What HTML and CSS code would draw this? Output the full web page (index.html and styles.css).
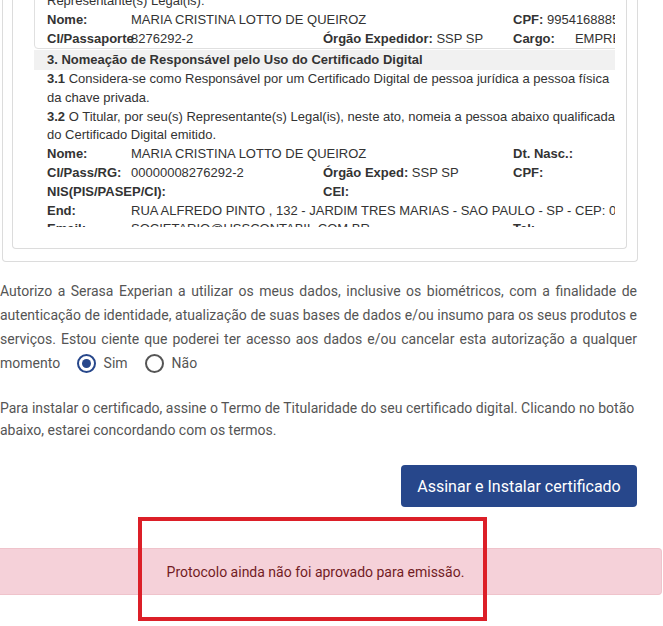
FILE: index.html
```html
<!DOCTYPE html>
<html lang="pt-BR">
<head>
<meta charset="utf-8">
<title>Termo de Titularidade</title>
<link rel="stylesheet" href="styles.css">
</head>
<body>
<div class="page">
  <div class="panel">
    <div class="doc-box">
      <div class="doc-clip">
        <div class="doc">
          <div class="rep">
            <div class="line">Representante(s) Legal(is):</div>
            <div class="grid">
              <b class="c1">Nome:</b><span class="c2w">MARIA CRISTINA LOTTO DE QUEIROZ</span><span class="c4"><b>CPF:</b> 99541688850</span>
              <b class="c1 over">CI/Passaporte</b><span class="c2">8276292-2</span><span class="c3"><b>Órgão Expedidor:</b> SSP SP</span><span class="c4 cargo"><b>Cargo:</b><span>EMPRESÁRIA</span></span>
            </div>
          </div>
          <div class="sec-title">3. Nomeação de Responsável pelo Uso do Certificado Digital</div>
          <div class="line"><b>3.1</b> Considera-se como Responsável por um Certificado Digital de pessoa jurídica a pessoa física</div>
          <div class="line">da chave privada.</div>
          <div class="line"><b>3.2</b> O Titular, por seu(s) Representante(s) Legal(is), neste ato, nomeia a pessoa abaixo qualificada</div>
          <div class="line">do Certificado Digital emitido.</div>
          <div class="grid">
            <b class="c1">Nome:</b><span class="c2w">MARIA CRISTINA LOTTO DE QUEIROZ</span><b class="c4">Dt. Nasc.:</b>
            <b class="c1">CI/Pass/RG:</b><span class="c2">00000008276292-2</span><span class="c3"><b>Órgão Exped:</b> SSP SP</span><b class="c4">CPF:</b>
            <b class="c1w">NIS(PIS/PASEP/CI):</b><b class="c3">CEI:</b><span class="c4"></span>
            <b class="c1">End:</b><span class="c2all">RUA ALFREDO PINTO , 132 - JARDIM TRES MARIAS - SAO PAULO - SP - CEP: 05890-000</span>
            <b class="c1">Email:</b><span class="c2w">SOCIETARIO@USSCONTABIL.COM.BR</span><b class="c4">Tel:</b>
          </div>
        </div>
      </div>
    </div>
  </div>

  <p class="consent">Autorizo a Serasa Experian a utilizar os meus dados, inclusive os biométricos, com a finalidade de autenticação de identidade, atualização de suas bases de dados e/ou insumo para os seus produtos e serviços. Estou ciente que poderei ter acesso aos dados e/ou cancelar esta autorização a qualquer momento <span class="radios"><label class="radio"><span class="dot checked"></span>Sim</label><label class="radio"><span class="dot"></span>Não</label></span></p>

  <p class="install">Para instalar o certificado, assine o Termo de Titularidade do seu certificado digital. Clicando no botão abaixo, estarei concordando com os termos.</p>

  <div class="actions">
    <button class="btn">Assinar e Instalar certificado</button>
  </div>

  <div class="alert">Protocolo ainda não foi aprovado para emissão.</div>

  <div class="highlight"></div>
</div>
</body>
</html>
```

FILE: styles.css
```css
html, body {
  margin: 0;
  padding: 0;
  background: #fff;
}

.page {
  position: relative;
  width: 663px;
  height: 626px;
  overflow: hidden;
}

.panel {
  width: 615px;
  margin: -18px 0 0 2px;
  border: 1px solid #dcdcdc;
  border-top: none;
  border-radius: 0 0 4px 4px;
  padding: 0 10px 12px 9px;
}

.doc-box {
  border: 1px solid #dcdcdc;
  border-top: none;
  border-radius: 0 0 4px 4px;
  padding: 0 11px 21px 21px;
}

.doc-clip {
  width: 581px;
  height: 245px;
  overflow: hidden;
}

.doc {
  width: 720px;
  font-family: "Liberation Sans", Arial, sans-serif;
  font-size: 13px;
  color: #333;
  line-height: 18.8px;
  white-space: nowrap;
}

.rep {
  border: 1px solid #e0e0e0;
  border-radius: 4px;
  padding: 7.5px 0 0 12px;
  line-height: 19px;
}

.line {
  height: 18.8px;
}

.rep .line {
  height: 19px;
}

.grid {
  display: grid;
  grid-template-columns: 84px 192px 190px 1fr;
  grid-auto-rows: 18.8px;
}

.rep .grid {
  grid-auto-rows: 19px;
}

.doc > .line,
.doc > .grid {
  padding-left: 13px;
}

.c1 { grid-column: 1; font-weight: bold; }
.c1.over { overflow: visible; white-space: nowrap; width: 84px; }
.c1w { grid-column: 1 / span 2; font-weight: bold; }
.c2 { grid-column: 2; }
.c2w { grid-column: 2 / span 2; }
.c2all { grid-column: 2 / span 3; }
.c3 { grid-column: 3; }
.c4 { grid-column: 4; }

.cargo {
  display: flex;
  gap: 20px;
}

.sec-title {
  margin-top: 1.5px;
  height: 20px;
  line-height: 20px;
  background: #f1f1f1;
  font-weight: bold;
  padding-left: 13px;
}

.consent,
.install {
  width: 637px;
  margin: 17px 0 0 0;
  font-family: Roboto, "Liberation Sans", sans-serif;
  font-size: 14px;
  color: #555;
  text-align: justify;
}

.consent {
  line-height: 24px;
}

.install {
  margin-top: 22px;
  line-height: 22px;
  text-align: left;
}

.radios {
  display: inline-flex;
  align-items: center;
  gap: 0;
  margin-left: 13px;
  vertical-align: top;
  height: 24px;
}

.radio {
  display: inline-flex;
  align-items: center;
  margin-right: 17px;
}

.dot {
  box-sizing: border-box;
  width: 19px;
  height: 19px;
  border: 2px solid #555;
  border-radius: 50%;
  margin-right: 8px;
  position: relative;
}

.dot.checked {
  border-color: #27478b;
}

.dot.checked::after {
  content: "";
  position: absolute;
  left: 3px;
  top: 3px;
  width: 9px;
  height: 9px;
  border-radius: 50%;
  background: #27478b;
}

.actions {
  width: 637px;
  display: flex;
  justify-content: flex-end;
  margin-top: 24px;
}

.btn {
  width: 236px;
  height: 42px;
  border: none;
  border-radius: 4px;
  background: #27478b;
  color: #fff;
  font-family: Roboto, "Liberation Sans", sans-serif;
  font-size: 16px;
  padding: 0;
}

.alert {
  box-sizing: border-box;
  width: 662px;
  height: 47px;
  margin-top: 41px;
  background: #f5d1d9;
  border: 1px solid #efc3cb;
  border-left: none;
  border-radius: 0 4px 4px 0;
  color: #721c24;
  font-family: Roboto, "Liberation Sans", sans-serif;
  font-size: 14px;
  display: flex;
  align-items: center;
  justify-content: center;
  padding-right: 30px;
}

.highlight {
  position: absolute;
  left: 138px;
  top: 517px;
  width: 341px;
  height: 96px;
  border: 4px solid #dc1f28;
}
```
